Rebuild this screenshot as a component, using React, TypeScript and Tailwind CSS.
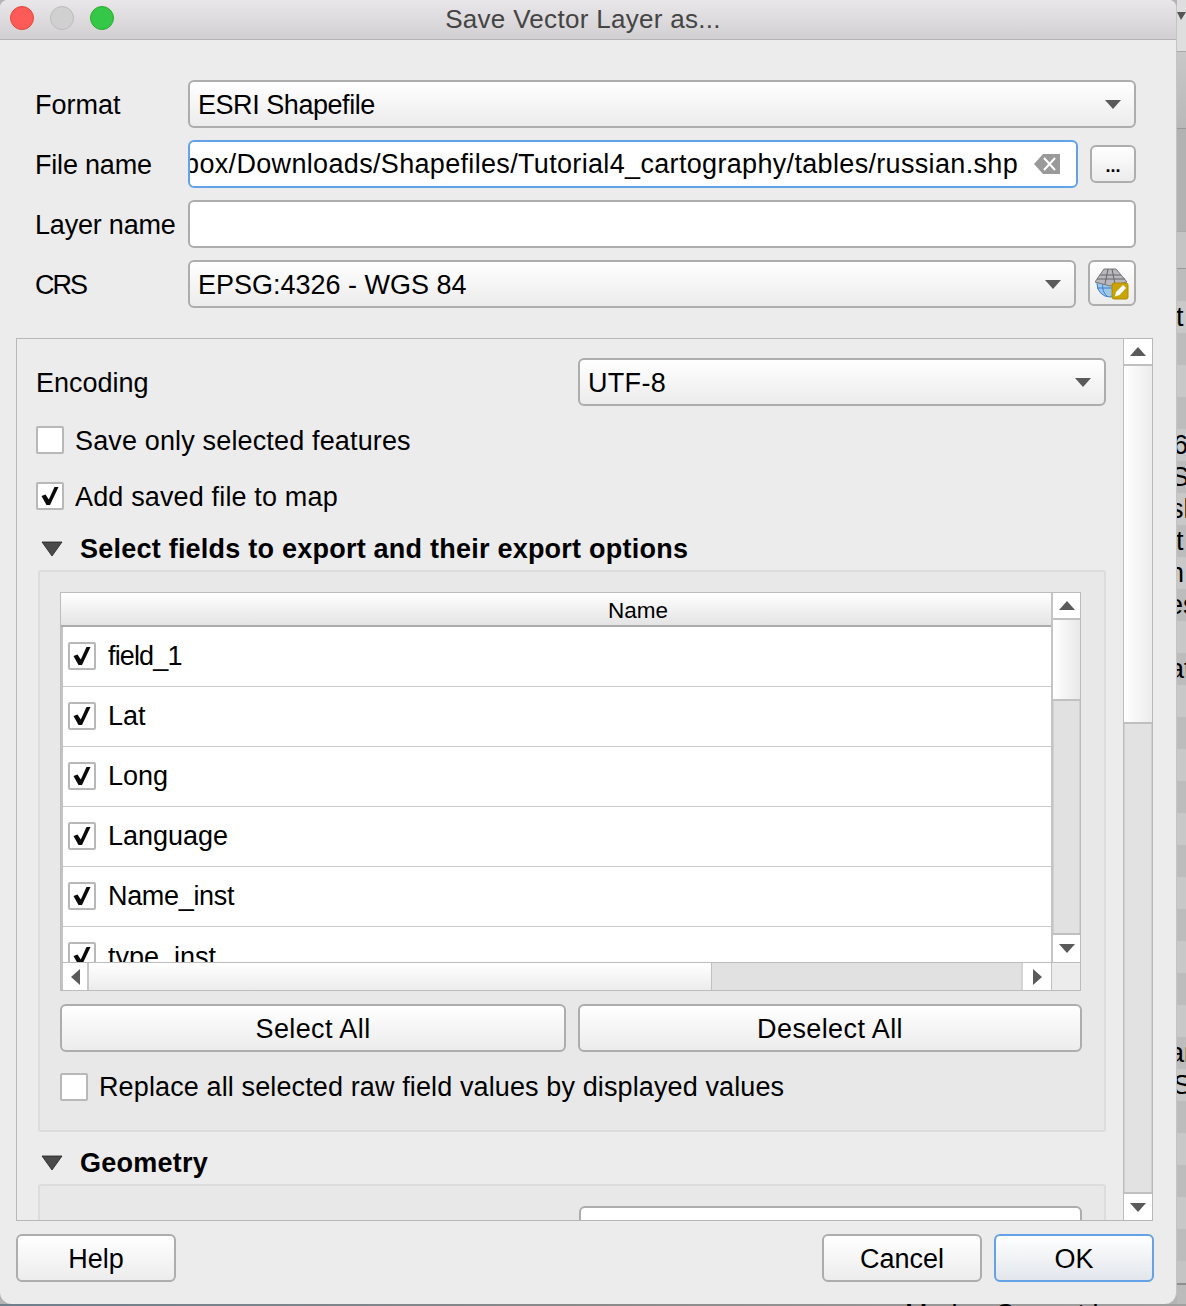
import React from "react";

const font = { fontFamily: '"Liberation Sans", Arial, sans-serif' };

const fields = [
	{ name: "field_1", cls: "tracking-[-0.85px]" },
	{ name: "Lat", cls: "" },
	{ name: "Long", cls: "" },
	{ name: "Language", cls: "" },
	{ name: "Name_inst", cls: "tracking-[-0.33px]" },
];

// what is left of the window behind the dialog, band by band
const backBands: Record<number, { text: string; cls: string }> = {
	1: { text: "t", cls: "ml-[-1px]" },
	5: { text: "6", cls: "ml-[-4px]" },
	6: { text: "Sa", cls: "ml-[-6px]" },
	7: { text: "sh", cls: "ml-[-7px]" },
	8: { text: "t", cls: "ml-[-1px]" },
	9: { text: "n", cls: "ml-[-8px]" },
	10: { text: "es", cls: "ml-[-9px]" },
	12: { text: "at", cls: "ml-[-8px]" },
	24: { text: "ar", cls: "ml-[-8px]" },
	25: { text: "Sa", cls: "ml-[-4px]" },
};

const Tri = ({ dir = "down", className = "" }: { dir?: "down" | "up" | "left" | "right"; className?: string }) => {
	const points = {
		down: "0,0 16,0 8,9",
		up: "0,9 16,9 8,0",
		left: "9,0 9,16 0,8",
		right: "0,0 0,16 9,8",
	}[dir];
	const horizontal = dir === "left" || dir === "right";
	return (
		<svg
			width={horizontal ? 9 : 16}
			height={horizontal ? 16 : 9}
			viewBox={horizontal ? "0 0 9 16" : "0 0 16 9"}
			className={"shrink-0 " + className}>
			<polygon points={points} fill="#5a5a5a" />
		</svg>
	);
};

const Check = ({ checked = false, className = "" }: { checked?: boolean; className?: string }) => (
	<span className={"block w-[28px] h-[28px] shrink-0 bg-white border-2 border-[#b8b8b8] rounded-[2px] " + className}>
		{checked && (
			<svg width="24" height="24" viewBox="0 0 24 24" className="block">
				<polygon points="3.5,12 7.5,10.5 10.8,15.5 16.5,3 20.5,3 12,21 8.5,21" fill="#0a0a0a" />
			</svg>
		)}
	</span>
);

const Combo = ({ text, className = "", textCls = "" }: { text?: string; className?: string; textCls?: string }) => (
	<div
		className={
			"h-[48px] flex items-center justify-between pl-[8px] pr-[13px] border-2 border-[#adadad] rounded-[6px] bg-linear-to-b from-white to-[#ececec] text-[27px] text-black " +
			className
		}>
		<span className={"pt-[2px] " + textCls}>{text}</span>
		<Tri />
	</div>
);

const Btn = ({ text, className = "" }: { text: string; className?: string }) => (
	<button
		className={
			"h-[48px] pt-[2px] border-2 border-[#adadad] rounded-[6px] bg-linear-to-b from-white to-[#ececec] text-[27px] text-black " +
			className
		}>
		{text}
	</button>
);

const FormLabel = ({ text, cls = "" }: { text: string; cls?: string }) => (
	<span className={"w-[153px] h-[48px] flex items-center pt-[2px] shrink-0 text-[27px] text-black " + cls}>{text}</span>
);

const GroupTitle = ({ text, cls = "" }: { text: string; cls?: string }) => (
	<div className="h-[28px] flex items-center">
		<svg width="22" height="16" viewBox="0 0 22 16" className="ml-[5px] shrink-0">
			<polygon points="1,1 21,1 11,15" fill="#4a4a4a" stroke="#222" strokeWidth="0.8" />
		</svg>
		<span className={"ml-[17px] text-[27px] font-bold text-black " + cls}>{text}</span>
	</div>
);

const GlobeIcon = () => (
	<svg width="34" height="32" viewBox="0 0 34 32" className="mt-[2px]">
		<circle cx="15" cy="16" r="13" fill="#9cc8f0" stroke="#3f7fc4" strokeWidth="1" />
		<path d="M2 20 H28 M8 14 Q6 24 13 29 M20 14 Q23 24 17 29" fill="none" stroke="#3f7fc4" strokeWidth="1" />
		<polygon points="9,1 21,1 32,14 15,18 0,14" fill="#b9b9bd" stroke="#77777b" strokeWidth="1" />
		<path d="M13 1 L10 16 M17 1 L20 16 M5 7 H26 M2 11 H30" fill="none" stroke="#66666a" strokeWidth="1" />
		<rect x="17" y="15" width="16" height="16" rx="2" fill="#c9a404" stroke="#ad8c00" />
		<path d="M20 28.5 L21 24 L28 17 L31 20 L24.5 27 Z" fill="#fff" />
	</svg>
);

const ClearIcon = () => (
	<svg width="26" height="20" viewBox="0 0 26 20" className="shrink-0">
		<polygon points="0,10 9,0 26,0 26,20 9,20" fill="#9a9a9a" />
		<path d="M10 4 L21 16 M21 4 L10 16" stroke="#fff" strokeWidth="2" />
	</svg>
);

export default function App() {
	return (
		<div className="w-[1186px] h-[1306px] overflow-hidden bg-[#b4b4b4]" style={font}>
			<div className="flex h-[1304px]">
				<div className="w-[1177px] h-full shrink-0 flex flex-col bg-[#ececec] rounded-t-[8px] rounded-b-[12px] border-r border-[#c4c4c4] overflow-hidden">
					{/* title bar */}
					<div className="h-[40px] shrink-0 flex items-center pb-[4px] bg-linear-to-b from-[#e9e7e9] to-[#d1cfd1] border-b border-[#b4b4b4] relative">
						<span className="ml-[10px] w-[24px] h-[24px] rounded-full bg-[#fc5b57] border border-[#e2463f]" />
						<span className="ml-[16px] w-[24px] h-[24px] rounded-full bg-[#d0d0d0] border border-[#bcbcbc]" />
						<span className="ml-[16px] w-[24px] h-[24px] rounded-full bg-[#34c748] border border-[#2dac2f]" />
						<span className="absolute inset-x-0 text-center pt-[4px] pr-[10px] text-[26px] tracking-[0.3px] text-[#444]">
							Save Vector Layer as...
						</span>
					</div>

					{/* top form */}
					<div className="pt-[40px] pl-[35px] pr-[40px] flex flex-col gap-[12px]">
						<div className="flex items-center">
							<FormLabel text="Format" />
							<Combo text="ESRI Shapefile" textCls="tracking-[-0.45px]" className="flex-1" />
						</div>
						<div className="flex items-center">
							<FormLabel text="File name" cls="tracking-[-0.2px]" />
							<div className="h-[48px] w-[890px] flex items-center justify-end overflow-hidden bg-white border-2 border-[#63a2e6] rounded-[6px] pr-[16px]">
								<span className="whitespace-nowrap shrink-0 text-[27px] tracking-[0.33px] text-black">
									box/Downloads/Shapefiles/Tutorial4_cartography/tables/russian.shp
								</span>
								<span className="ml-[16px] shrink-0">
									<ClearIcon />
								</span>
							</div>
							<button className="ml-[12px] w-[46px] h-[38px] flex justify-center items-end pb-[6px] border-2 border-[#adadad] rounded-[6px] bg-linear-to-b from-white to-[#ececec] text-[18px] font-bold leading-none text-black">
								...
							</button>
						</div>
						<div className="flex items-center">
							<FormLabel text="Layer name" cls="tracking-[-0.2px]" />
							<div className="h-[48px] flex-1 bg-white border-2 border-[#adadad] rounded-[6px]" />
						</div>
						<div className="flex items-start">
							<FormLabel text="CRS" cls="tracking-[-2px]" />
							<Combo text="EPSG:4326 - WGS 84" className="w-[888px]" />
							<button className="ml-[12px] w-[48px] h-[46px] flex items-center justify-center border-2 border-[#adadad] rounded-[6px] bg-linear-to-b from-white to-[#ececec]">
								<GlobeIcon />
							</button>
						</div>
					</div>

					{/* scrolling options */}
					<div className="mt-[30px] ml-[16px] w-[1137px] h-[883px] shrink-0 flex border border-[#b8b8b8] overflow-hidden">
						<div className="flex-1 min-w-0 overflow-hidden pt-[19px] pl-[19px]">
							<div className="flex items-center justify-between h-[48px] pr-[17px]">
								<span className="pt-[2px] text-[27px] text-black">Encoding</span>
								<Combo text="UTF-8" textCls="tracking-[0.3px]" className="w-[528px]" />
							</div>
							<label className="mt-[20px] flex items-center h-[28px]">
								<Check />
								<span className="ml-[11px] pt-[2px] text-[27px] tracking-[0.15px] text-black">Save only selected features</span>
							</label>
							<label className="mt-[28px] flex items-center h-[28px]">
								<Check checked />
								<span className="ml-[11px] pt-[2px] text-[27px] tracking-[0.15px] text-black">Add saved file to map</span>
							</label>
							<div className="mt-[25px]">
								<GroupTitle text="Select fields to export and their export options" cls="tracking-[0.23px]" />
							</div>

							{/* fields group */}
							<div className="mt-[7px] ml-[2px] w-[1068px] h-[562px] bg-[#e8e8e8] border-2 border-[#dcdcdc] rounded-[3px] pt-[20px] pl-[20px]">
								<div className="w-[1021px] h-[399px] flex flex-col border border-[#bcbcbc] bg-white">
									<div className="flex h-[369px]">
										<div className="flex-1 min-w-0 overflow-hidden">
											<div className="h-[34px] flex items-center justify-center pl-[164px] pt-[4px] bg-linear-to-b from-white to-[#e4e4e4] border-b-2 border-[#ababab] text-[22.5px] text-black">
												Name
											</div>
											<div className="border-l-2 border-[#c4c4c4]">
												{fields.map((f) => (
													<div key={f.name} className="h-[60px] flex items-center pl-[5px] border-b border-[#cbcbcb]">
														<Check checked className="mb-[2px]" />
														<span className={"ml-[12px] text-[27px] text-black " + f.cls}>{f.name}</span>
													</div>
												))}
												<div className="h-[60px] flex items-center pl-[5px]">
													<Check checked className="mb-[2px]" />
													<span className="ml-[12px] text-[27px] text-black">type_inst</span>
												</div>
											</div>
										</div>
										<div className="w-[29px] shrink-0 flex flex-col border-l-2 border-[#c4c4c4]">
											<div className="h-[27px] flex items-center justify-center bg-white border-b-2 border-[#c0c0c0]">
												<Tri dir="up" />
											</div>
											<div className="h-[81px] bg-linear-to-r from-white to-[#e8e8e8] border-b-2 border-[#c0c0c0]" />
											<div className="flex-1 bg-[#e1e1e1] border-x border-[#d0d0d0]" />
											<div className="h-[29px] flex items-center justify-center bg-white border-t-2 border-[#c0c0c0]">
												<Tri />
											</div>
										</div>
									</div>
									<div className="h-[28px] flex border-t border-[#bcbcbc] border-l-2 border-l-[#c4c4c4]">
										<div className="w-[26px] flex items-center justify-center bg-white border-r-2 border-[#c8c8c8]">
											<Tri dir="left" />
										</div>
										<div className="w-[623px] bg-linear-to-b from-white to-[#ececec] border-r border-[#c0c0c0]" />
										<div className="flex-1 bg-[#e1e1e1] border-r-2 border-[#d4d4d4]" />
										<div className="w-[28px] flex items-center justify-center bg-white">
											<Tri dir="right" />
										</div>
										<div className="w-[29px] border-l border-[#c0c0c0] bg-[#ececec]" />
									</div>
								</div>
								<div className="mt-[13px] flex gap-[12px] w-[1022px]">
									<Btn text="Select All" className="w-[506px] tracking-[0.4px]" />
									<Btn text="Deselect All" className="w-[504px] tracking-[0.4px]" />
								</div>
								<label className="mt-[21px] flex items-center h-[28px]">
									<Check />
									<span className="ml-[11px] text-[27px] tracking-[0.12px] text-black">
										Replace all selected raw field values by displayed values
									</span>
								</label>
							</div>

							<div className="mt-[17px]">
								<GroupTitle text="Geometry" cls="tracking-[0.25px]" />
							</div>
							<div className="mt-[7px] ml-[2px] w-[1068px] h-[100px] bg-[#e8e8e8] border-2 border-[#dcdcdc] rounded-[3px] pt-[20px] pl-[539px]">
								<div className="w-[503px] h-[48px] border-2 border-[#adadad] rounded-[6px] bg-white" />
							</div>
						</div>

						<div className="w-[29px] shrink-0 flex flex-col border-l border-[#bcbcbc]">
							<div className="h-[27px] flex items-center justify-center bg-white border-b-2 border-[#c0c0c0]">
								<Tri dir="up" />
							</div>
							<div className="h-[358px] bg-linear-to-r from-white to-[#ececec] border-b-2 border-[#c0c0c0]" />
							<div className="flex-1 bg-[#e2e2e2] border-x border-[#d0d0d0]" />
							<div className="h-[28px] flex items-center justify-center bg-white border-t-2 border-[#c0c0c0]">
								<Tri />
							</div>
						</div>
					</div>

					{/* footer */}
					<div className="mt-[13px] px-[16px] flex">
						<Btn text="Help" className="w-[160px]" />
						<Btn text="Cancel" className="w-[160px] ml-auto" />
						<button className="ml-[12px] mr-[6px] w-[160px] h-[48px] pt-[2px] border-2 border-[#63a2e6] rounded-[6px] bg-linear-to-b from-white to-[#e2e6ec] text-[27px] text-black">
							OK
						</button>
					</div>
				</div>

				{/* window behind the dialog */}
				<div className="flex-1 min-w-0 overflow-hidden flex flex-col text-[27px] text-black">
					<div className="h-[52px] shrink-0 bg-[#dedede] border-b border-[#aaa] pt-[12px]">
						<svg width="9" height="8" viewBox="0 0 9 8" className="block">
							<polygon points="0,0 9,0 4,8" fill="#555" />
						</svg>
					</div>
					<div className="h-[77px] shrink-0 bg-linear-to-b from-[#c8c8c8] to-[#b8b8b8] border-b border-[#999]" />
					<div className="h-[103px] shrink-0 bg-[#b2b2b2] border-b border-[#aaa]" />
					<div className="h-[37px] shrink-0 bg-[#c4c4c4] border-b border-[#999]" />
					{Array.from({ length: 31 }).map((_, i) => (
						<div
							key={i}
							className={
								"h-[32px] shrink-0 flex items-center whitespace-nowrap " +
								(i % 2 === 0 ? "bg-[#bcbcbc]" : "bg-[#c8c8c8]")
							}>
							{backBands[i] && <span className={backBands[i].cls}>{backBands[i].text}</span>}
						</div>
					))}
					<div className="h-[24px] shrink-0 bg-[#c4c4c4] border-b-2 border-[#8e8e8e]" />
					<div className="flex-1 bg-[#bbb]" />
				</div>
			</div>
			{/* bottom edge of the window behind */}
			<div className="h-[2px] flex overflow-hidden bg-linear-to-r from-[#6e7f8c] via-[#8a8a8a] to-[#a0a0a0]">
				<span className="ml-[905px] mt-[-3px] whitespace-nowrap text-[27px] leading-[27px] text-black">
					Mode&nbsp;&nbsp;&nbsp;Current layer
				</span>
			</div>
		</div>
	);
}
